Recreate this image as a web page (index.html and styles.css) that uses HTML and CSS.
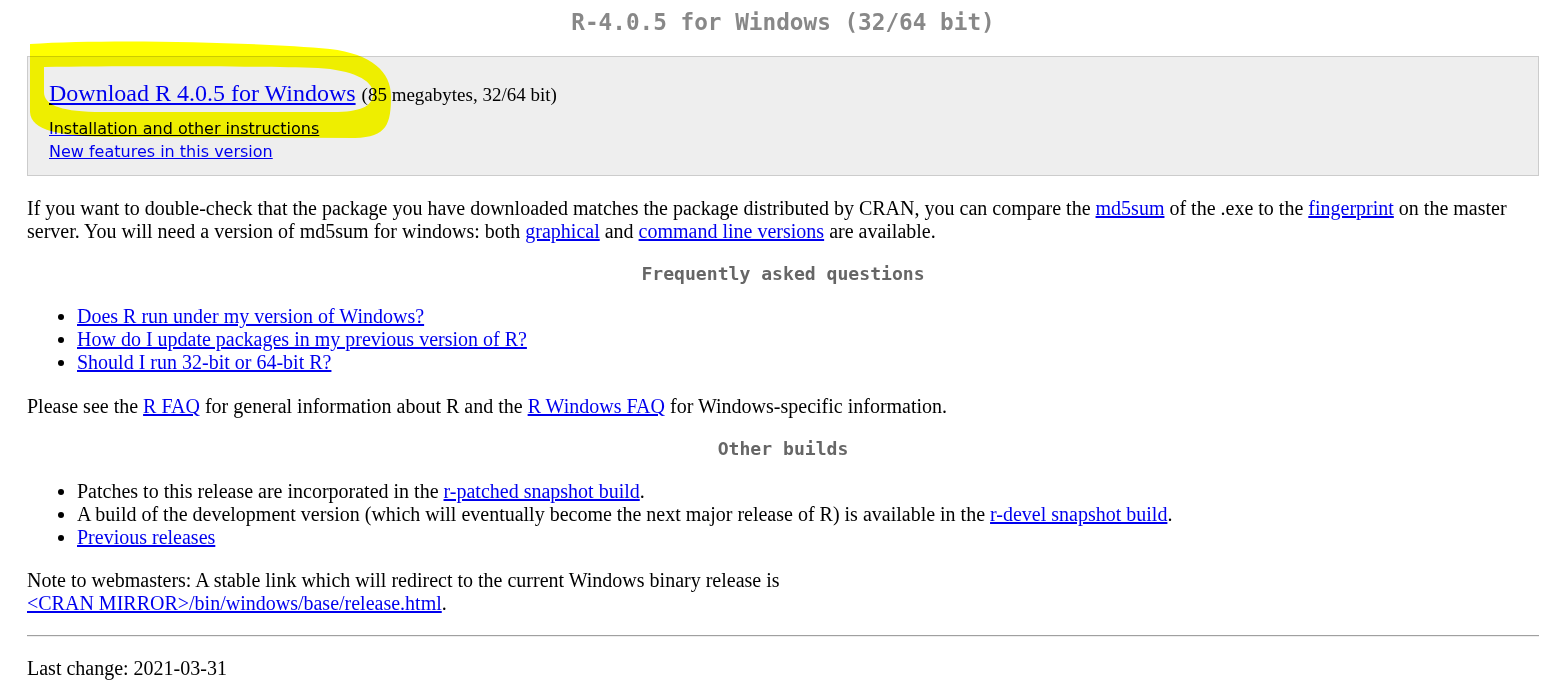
FILE: index.html
```html
<!DOCTYPE html>
<html>
<head>
<meta charset="utf-8">
<title>R-4.0.5 for Windows</title>
<link rel="stylesheet" href="styles.css">
</head>
<body>
<h1 class="title">R-4.0.5 for Windows (32/64 bit)</h1>

<div class="download-box">
  <p class="dl-line"><a class="dl-main" href="#">Download R 4.0.5 for Windows</a> <span class="dl-size">(85 megabytes, 32/64 bit)</span></p>
  <p class="dl-sub"><a href="#">Installation and other instructions</a></p>
  <p class="dl-sub"><a href="#">New features in this version</a></p>
</div>

<p class="para wide">If you want to double-check that the package you have downloaded matches the package distributed by CRAN, you can compare the <a href="#">md5sum</a> of the .exe to the <a href="#">fingerprint</a> on the master server. You will need a version of md5sum for windows: both <a href="#">graphical</a> and <a href="#">command line versions</a> are available.</p>

<h2 class="section">Frequently asked questions</h2>

<ul class="list">
  <li><a href="#">Does R run under my version of Windows?</a></li>
  <li><a href="#">How do I update packages in my previous version of R?</a></li>
  <li><a href="#">Should I run 32-bit or 64-bit R?</a></li>
</ul>

<p class="para wide">Please see the <a href="#">R FAQ</a> for general information about R and the <a href="#">R Windows FAQ</a> for Windows-specific information.</p>

<h2 class="section">Other builds</h2>

<ul class="list">
  <li>Patches to this release are incorporated in the <a href="#">r-patched snapshot build</a>.</li>
  <li>A build of the development version (which will eventually become the next major release of R) is available in the <a href="#">r-devel snapshot build</a>.</li>
  <li><a href="#">Previous releases</a></li>
</ul>

<p class="para">Note to webmasters: A stable link which will redirect to the current Windows binary release is<br><a href="#">&lt;CRAN MIRROR&gt;/bin/windows/base/release.html</a>.</p>

<hr class="rule">

<p class="para">Last change: 2021-03-31</p>

<svg class="highlight" width="420" height="160" viewBox="0 0 420 160" aria-hidden="true">
  <path fill="#ffff00" fill-rule="evenodd" d="M30,44 C 110,39 250,42 330,49 C 372,54 391,72 391,96 C 391,124 387,137 355,138 L 110,137 C 60,136 31,131 30,112 Z M44,67 C 120,66 250,66 318,68 C 352,70 373,80 373,93 C 373,105 364,111 338,112 L 95,112 C 58,111 44,104 44,92 Z"/>
</svg>
</body>
</html>
```

FILE: styles.css
```css
html {
  background: #ffffff;
}

body {
  margin: 0 9px 0 27px;
  font-family: "Liberation Serif", "Times New Roman", serif;
  font-size: 20px;
  line-height: 23px;
  color: #000000;
}

a {
  color: #0000ee;
  text-decoration: underline;
}

.title {
  margin: 0;
  padding-top: 7px;
  font-family: "DejaVu Sans Mono", monospace;
  font-weight: bold;
  font-size: 22.7px;
  line-height: 30px;
  color: #888888;
  text-align: center;
}

.download-box {
  margin-top: 19px;
  border: 1px solid #cccccc;
  background: #eeeeee;
  padding: 22px 20px 12px 21px;
}

.download-box p {
  margin: 0;
}

.download-box .dl-line {
  font-size: 24px;
  line-height: 28px;
  margin-bottom: 8px;
}

.dl-size {
  font-size: 19px;
}

.dl-sub {
  font-family: "DejaVu Sans", Verdana, sans-serif;
  font-size: 16px;
  line-height: 23px;
}

.para {
  margin: 20px 0 0 0;
}

.para.wide {
  margin-top: 21px;
}

.section {
  margin: 19px 0 0 0;
  font-family: "DejaVu Sans Mono", monospace;
  font-weight: bold;
  font-size: 18.1px;
  line-height: 24px;
  color: #666666;
  text-align: center;
}

.list {
  margin: 19px 0 0 0;
  padding-left: 50px;
  list-style: disc;
}

.rule {
  margin: 20px 0 0 0;
  height: 0;
  border: 0;
  border-top: 1px solid #a0a0a0;
  border-bottom: 1px solid #eeeeee;
}

.highlight {
  position: absolute;
  left: 0;
  top: 0;
  pointer-events: none;
  mix-blend-mode: multiply;
}
```
